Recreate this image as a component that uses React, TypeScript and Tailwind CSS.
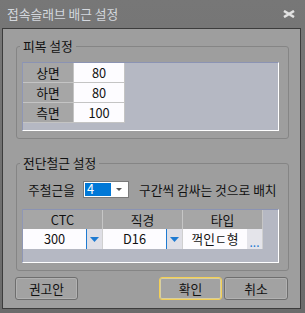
import type { FC, ReactNode } from "react";

const font = "font-['Noto_Sans_CJK_KR','Noto_Sans',sans-serif]";

const covers = [
  { label: "상면", value: "80" },
  { label: "하면", value: "80" },
  { label: "측면", value: "100" },
];

const DownArrow: FC = () => (
  <svg width="9" height="5" viewBox="0 0 9 5">
    <polygon points="0,0 9,0 4.5,5" fill="#1f7bd2" />
  </svg>
);

const Group: FC<{ title: string; className?: string; children: ReactNode }> = ({
  title,
  className,
  children,
}) => (
  <fieldset
    className={`ml-[13px] w-[273px] rounded-[3px] border border-[#858585] p-0 ${className ?? ""}`}
  >
    <legend className="ml-[3px] h-[16px] px-[3px] text-[12.75px] leading-[16px] text-[#111]">
      {title}
    </legend>
    {children}
  </fieldset>
);

const Button: FC<{ label: string; primary?: boolean; width: string }> = ({
  label,
  primary,
  width,
}) => (
  <button
    className={`${width} h-[23px] rounded-[3px] border bg-[#a2a2a2] text-[12.75px] leading-[16px] text-[#111] ${
      primary
        ? "border-[#f3cf55] shadow-[inset_0_0_0_1px_#d8cfa0]"
        : "border-[#6e6e6e] shadow-[inset_0_0_0_1px_#b1b1b1]"
    }`}
  >
    {label}
  </button>
);

const App: FC = () => {
  return (
    <div
      className={`${font} flex h-[313px] w-[305px] flex-col bg-gradient-to-b from-[#777777] to-[#6b6b6b]`}
    >
      {/* title bar */}
      <div className="flex h-[28px] items-center justify-between pl-[7px] pr-[10px]">
        <span className="text-[12.75px] leading-[16px] text-[#d4d8de]">접속슬래브 배근 설정</span>
        <svg width="12" height="8" viewBox="0 0 12 8">
          <path d="M1 1 L11 7 M11 1 L1 7" stroke="#e2e2e2" strokeWidth="2.6" />
        </svg>
      </div>

      {/* client area */}
      <div className="mb-[4px] ml-[2px] mr-[4px] flex flex-1 flex-col border border-[#3c3c3c] bg-[#9e9e9e]">
        <Group title="피복 설정" className="mt-[9px]">
          <div className="pb-[7px] pl-[5px] pt-[8px]">
            <div className="h-[69px] w-[257px] border-b border-l border-r border-t border-b-white border-l-[#8f97b5] border-r-white border-t-[#8b93b3] bg-[#b5b8c3]">
              {covers.map((c) => (
                <div key={c.label} className="flex h-[20px]">
                  <div className="flex w-[51px] items-center justify-center border-b border-r border-[#c4c4c4] bg-[#a6a6a6] text-[12.75px] text-[#111]">
                    {c.label}
                  </div>
                  <div className="flex w-[51px] items-center justify-center border-b border-r border-[#c4c4c4] bg-[#fdfcff] text-[12.75px] text-[#111]">
                    {c.value}
                  </div>
                </div>
              ))}
            </div>
          </div>
        </Group>

        <Group title="전단철근 설정" className="mt-[16px]">
          <div className="pb-[7px] pl-[5px] pt-[10px]">
            <div className="flex h-[17px] items-center pl-[6px] text-[12.75px] text-[#111]">
              <span className="w-[55px]">주철근을</span>
              <div className="flex h-[17px] w-[46px] items-center border border-[#7a7a7a] bg-white p-[1px]">
                <div className="flex h-full w-[26px] items-center bg-[#0078d7] pl-[2px] leading-none text-white">
                  4
                </div>
                <div className="flex flex-1 items-center justify-center">
                  <svg width="6" height="3" viewBox="0 0 6 3">
                    <polygon points="0,0 6,0 3,3" fill="#555" />
                  </svg>
                </div>
              </div>
              <span className="ml-[10px]">구간씩 감싸는 것으로 배치</span>
            </div>

            <div className="mt-[11px] h-[54px] w-[257px] border-b border-l border-r border-t border-b-white border-l-[#8f97b5] border-r-white border-t-[#8b93b3] bg-[#b5b8c3]">
              <div className="flex h-[19px]">
                {["CTC", "직경", "타입"].map((h) => (
                  <div
                    key={h}
                    className="flex w-[80px] items-center justify-center border-r border-[#c6c6c6] bg-[#a6a6a6] text-[12.75px] text-[#111]"
                  >
                    {h}
                  </div>
                ))}
              </div>
              <div className="flex h-[20px]">
                {["300", "D16"].map((v) => (
                  <div key={v} className="flex w-[80px] border-r border-[#d0d0d0]">
                    <div className="flex flex-1 items-center justify-center bg-[#fdfcff] text-[12.75px] text-[#111]">
                      {v}
                    </div>
                    <div className="flex w-[16px] items-center justify-center border-l border-[#1f7bd2] bg-[#dfdfe6]">
                      <DownArrow />
                    </div>
                  </div>
                ))}
                <div className="flex w-[80px] border-r border-[#d0d0d0]">
                  <div className="flex flex-1 items-center justify-center bg-[#fdfcff] text-[12.75px] text-[#111]">
                    꺽인ㄷ형
                  </div>
                  <div className="flex w-[15px] items-end justify-center bg-[#e4e4ea] pb-[1px] text-[12px] leading-[12px] text-[#1f7bd2]">
                    ...
                  </div>
                </div>
              </div>
            </div>
          </div>
        </Group>

        <div className="mt-[6px] flex justify-between px-[12px]">
          <Button label="권고안" width="w-[63px]" />
          <div className="flex gap-[2px]">
            <Button label="확인" width="w-[63px]" primary />
            <Button label="취소" width="w-[64px]" />
          </div>
        </div>
      </div>
    </div>
  );
};

export default App;
